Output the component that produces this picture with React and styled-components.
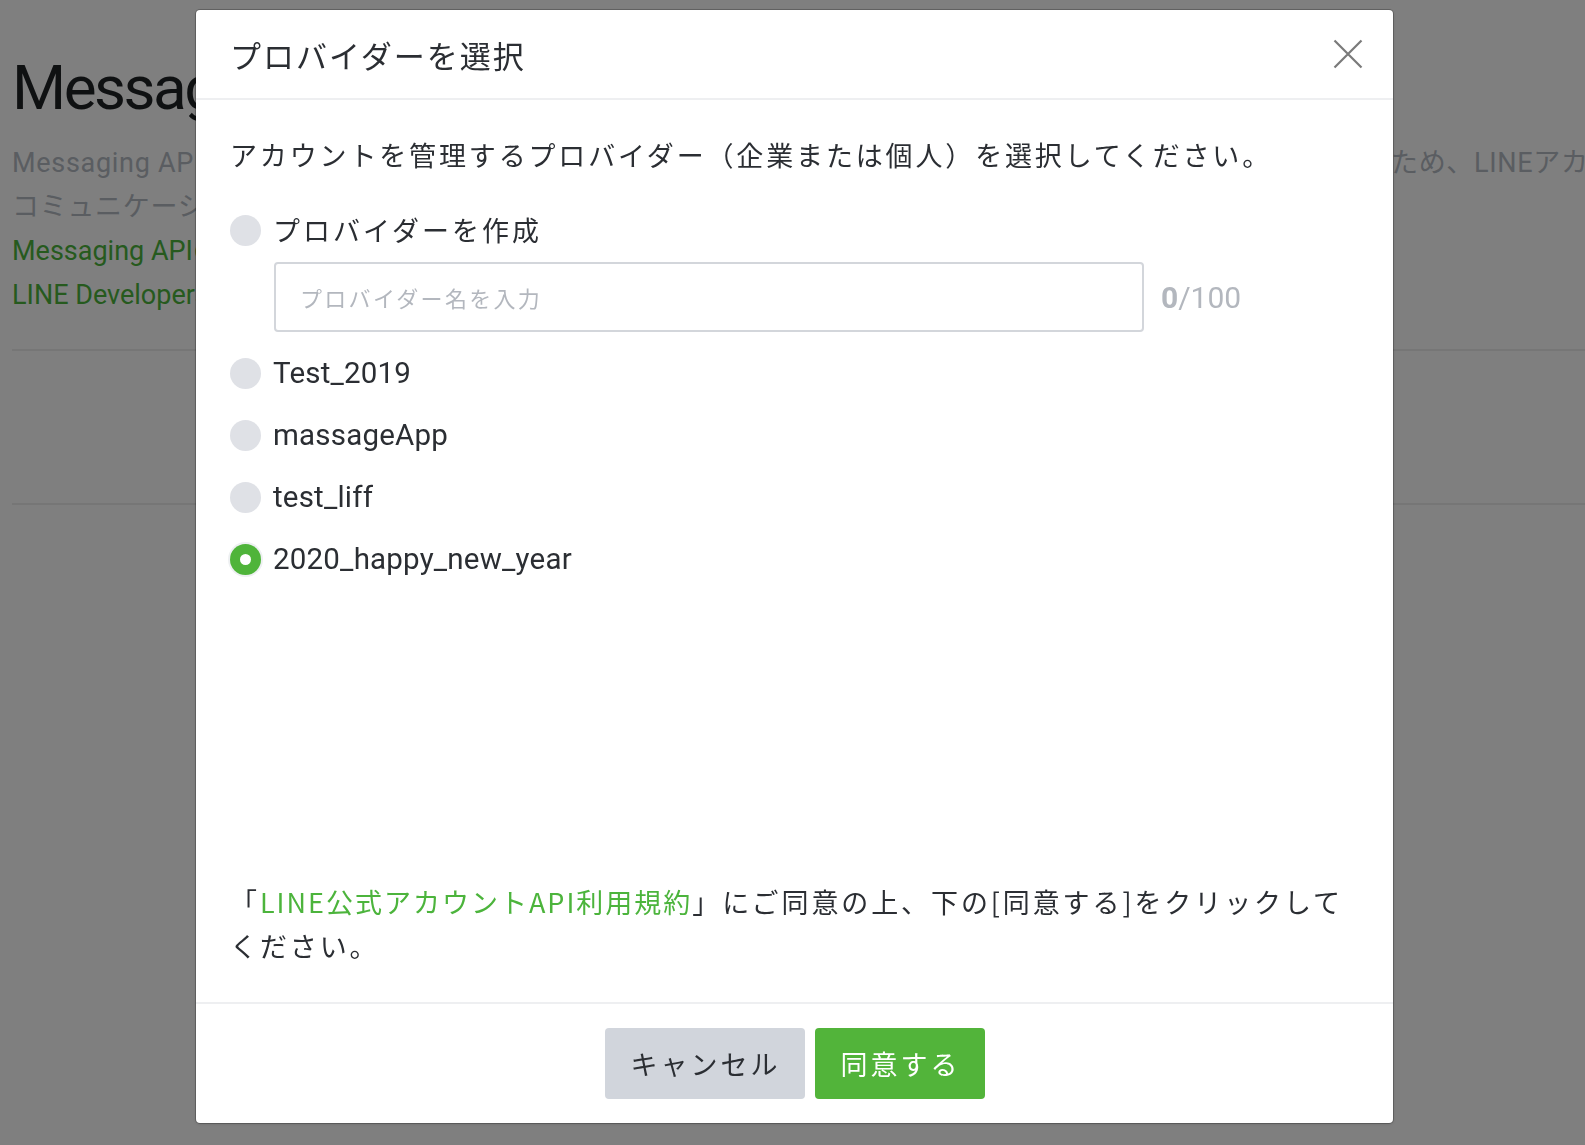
import React from "react";
import styled, { createGlobalStyle } from "styled-components";

const Global = createGlobalStyle`
  html, body { margin: 0; padding: 0; background: #fff; }
  body { font-family: Roboto, "Noto Sans CJK JP", sans-serif; color: #2b2e33; }
  * { box-sizing: border-box; }
`;

const Page = styled.div`
  width: 1585px;
  height: 1145px;
  overflow: hidden;
  position: relative;
  padding: 48px 0 0 12px;
`;

const PageTitle = styled.h1`
  margin: 0 0 13px;
  font-size: 62px;
  font-weight: 400;
  line-height: 80px;
  letter-spacing: -2.5px;
  color: #1f2225;
  white-space: nowrap;
`;

const PageText = styled.p`
  margin: 0;
  font-size: 27px;
  line-height: 44px;
  color: ${(p) => (p.$green ? "#4cb43c" : "#b4bac3")};
  white-space: nowrap;
  letter-spacing: ${(p) => (p.$green ? "0" : "0.7px")};
`;

const Rule = styled.hr`
  margin: ${(p) => p.$mt}px 0 0;
  border: none;
  border-top: 2px solid #ececec;
  width: 1600px;
`;

const Overlay = styled.div`
  position: fixed;
  inset: 0;
  background: rgba(0, 0, 0, 0.5);
`;

const Modal = styled.div`
  position: absolute;
  top: 10px;
  left: 196px;
  width: 1197px;
  height: 1113px;
  background: #fff;
  border-radius: 4px;
  box-shadow: 0 0 0 1px rgba(0, 0, 0, 0.22), 0 1px 3px rgba(0, 0, 0, 0.15);
  display: flex;
  flex-direction: column;
`;

const Header = styled.div`
  height: 90px;
  flex: none;
  display: flex;
  align-items: center;
  justify-content: space-between;
  padding: 0 28px 0 34px;
  border-bottom: 2px solid #eeeff1;
`;

const Title = styled.h2`
  margin: 0;
  font-family: "Noto Sans CJK JP", sans-serif;
  font-size: 31px;
  font-weight: 400;
  letter-spacing: 2px;
  color: #2b2e33;
`;

const CloseButton = styled.button`
  width: 34px;
  height: 34px;
  border: none;
  background: none;
  padding: 0;
  display: flex;
  align-items: center;
  justify-content: center;
  cursor: pointer;
`;

const Body = styled.div`
  flex: 1;
  display: flex;
  flex-direction: column;
  padding: 35px 34px 34px;
`;

const Lead = styled.p`
  margin: 0 0 33px;
  font-family: "Noto Sans CJK JP", sans-serif;
  font-size: 27px;
  line-height: 40px;
  letter-spacing: 2.85px;
  color: #2b2e33;
`;

const Options = styled.div`
  display: flex;
  flex-direction: column;
  gap: 18px;
`;

const Option = styled.label`
  display: flex;
  align-items: center;
  gap: 12px;
  height: 44px;
  cursor: pointer;
`;

const Radio = styled.span`
  width: 31px;
  height: 31px;
  flex: none;
  border-radius: 50%;
  background: ${(p) => (p.$checked ? "#4fb43a" : "#dfe1e6")};
  box-shadow: ${(p) => (p.$checked ? "0 0 0 2px #eef0f2" : "none")};
  display: flex;
  align-items: center;
  justify-content: center;
  &::after {
    content: "";
    width: 11px;
    height: 11px;
    border-radius: 50%;
    background: #fff;
    display: ${(p) => (p.$checked ? "block" : "none")};
  }
`;

const OptionLabel = styled.span`
  font-family: ${(p) =>
    p.$jp ? `"Noto Sans CJK JP", sans-serif` : `Roboto, "Noto Sans CJK JP", sans-serif`};
  font-size: ${(p) => (p.$jp ? "27px" : "29.5px")};
  letter-spacing: ${(p) => (p.$jp ? "3px" : "0.2px")};
  color: #2b2e33;
  line-height: 44px;
`;

const InputRow = styled.div`
  display: flex;
  align-items: center;
  gap: 17px;
  margin: -8px 0 1px 44px;
`;

const TextInput = styled.input`
  width: 870px;
  height: 70px;
  border: 2px solid #d3d6db;
  border-radius: 4px;
  padding: 0 24px;
  font-family: "Noto Sans CJK JP", sans-serif;
  font-size: 22px;
  letter-spacing: 2.3px;
  color: #2b2e33;
  outline: none;
  &::placeholder { color: #b3b7be; }
`;

const Counter = styled.span`
  font-family: Roboto, sans-serif;
  font-size: 30px;
  color: #b3b7be;
  b { font-weight: 700; }
`;

const Agreement = styled.p`
  margin: auto 0 0;
  font-family: "Noto Sans CJK JP", sans-serif;
  font-size: 27px;
  line-height: 44px;
  letter-spacing: 2.9px;
  color: #2b2e33;
  a {
    color: #4cb43c;
    text-decoration: none;
    letter-spacing: 2px;
  }
`;

const Footer = styled.div`
  flex: none;
  border-top: 2px solid #eeeff1;
  display: flex;
  justify-content: center;
  gap: 10px;
  padding: 24px 0 24px;
`;

const Button = styled.button`
  height: 71px;
  padding: 0 24px 0 26px;
  border: none;
  border-radius: 4px;
  background: ${(p) => (p.$primary ? "#52b43a" : "#d1d5dc")};
  color: ${(p) => (p.$primary ? "#fff" : "#2b2e33")};
  font-family: "Noto Sans CJK JP", sans-serif;
  font-size: 27px;
  letter-spacing: 3px;
  cursor: pointer;
`;

const providers = ["Test_2019", "massageApp", "test_liff", "2020_happy_new_year"];

export default function App() {
  return (
    <>
      <Global />
      <Page>
        <PageTitle>Messaging API</PageTitle>
        <PageText>
          Messaging APIを利用すると、ボットサーバーとプラットフォームの間でデータを交換し、相互にやり取りするため、LINEアカウントを使用できます。
        </PageText>
        <PageText>コミュニケーションを始めましょう。</PageText>
        <PageText $green>Messaging APIのドキュメント</PageText>
        <PageText $green>LINE Developersコンソール</PageText>
        <Rule $mt={32} />
        <Rule $mt={152} />
        <Overlay />
        <Modal>
          <Header>
            <Title>プロバイダーを選択</Title>
            <CloseButton aria-label="閉じる">
              <svg width="30" height="30" viewBox="0 0 30 30">
                <path d="M1.5 1.5 L28.5 28.5 M28.5 1.5 L1.5 28.5" stroke="#7a7a7a" strokeWidth="2.2" fill="none" />
              </svg>
            </CloseButton>
          </Header>
          <Body>
            <Lead>アカウントを管理するプロバイダー（企業または個人）を選択してください。</Lead>
            <Options>
              <Option>
                <Radio />
                <OptionLabel $jp>プロバイダーを作成</OptionLabel>
              </Option>
              <InputRow>
                <TextInput placeholder="プロバイダー名を入力" />
                <Counter>
                  <b>0</b>/100
                </Counter>
              </InputRow>
              {providers.map((name, i) => (
                <Option key={name}>
                  <Radio $checked={i === providers.length - 1} />
                  <OptionLabel>{name}</OptionLabel>
                </Option>
              ))}
            </Options>
            <Agreement>
              「<a href="#">LINE公式アカウントAPI利用規約</a>」にご同意の上、下の[同意する]をクリックしてください。
            </Agreement>
          </Body>
          <Footer>
            <Button>キャンセル</Button>
            <Button $primary>同意する</Button>
          </Footer>
        </Modal>
      </Page>
    </>
  );
}
